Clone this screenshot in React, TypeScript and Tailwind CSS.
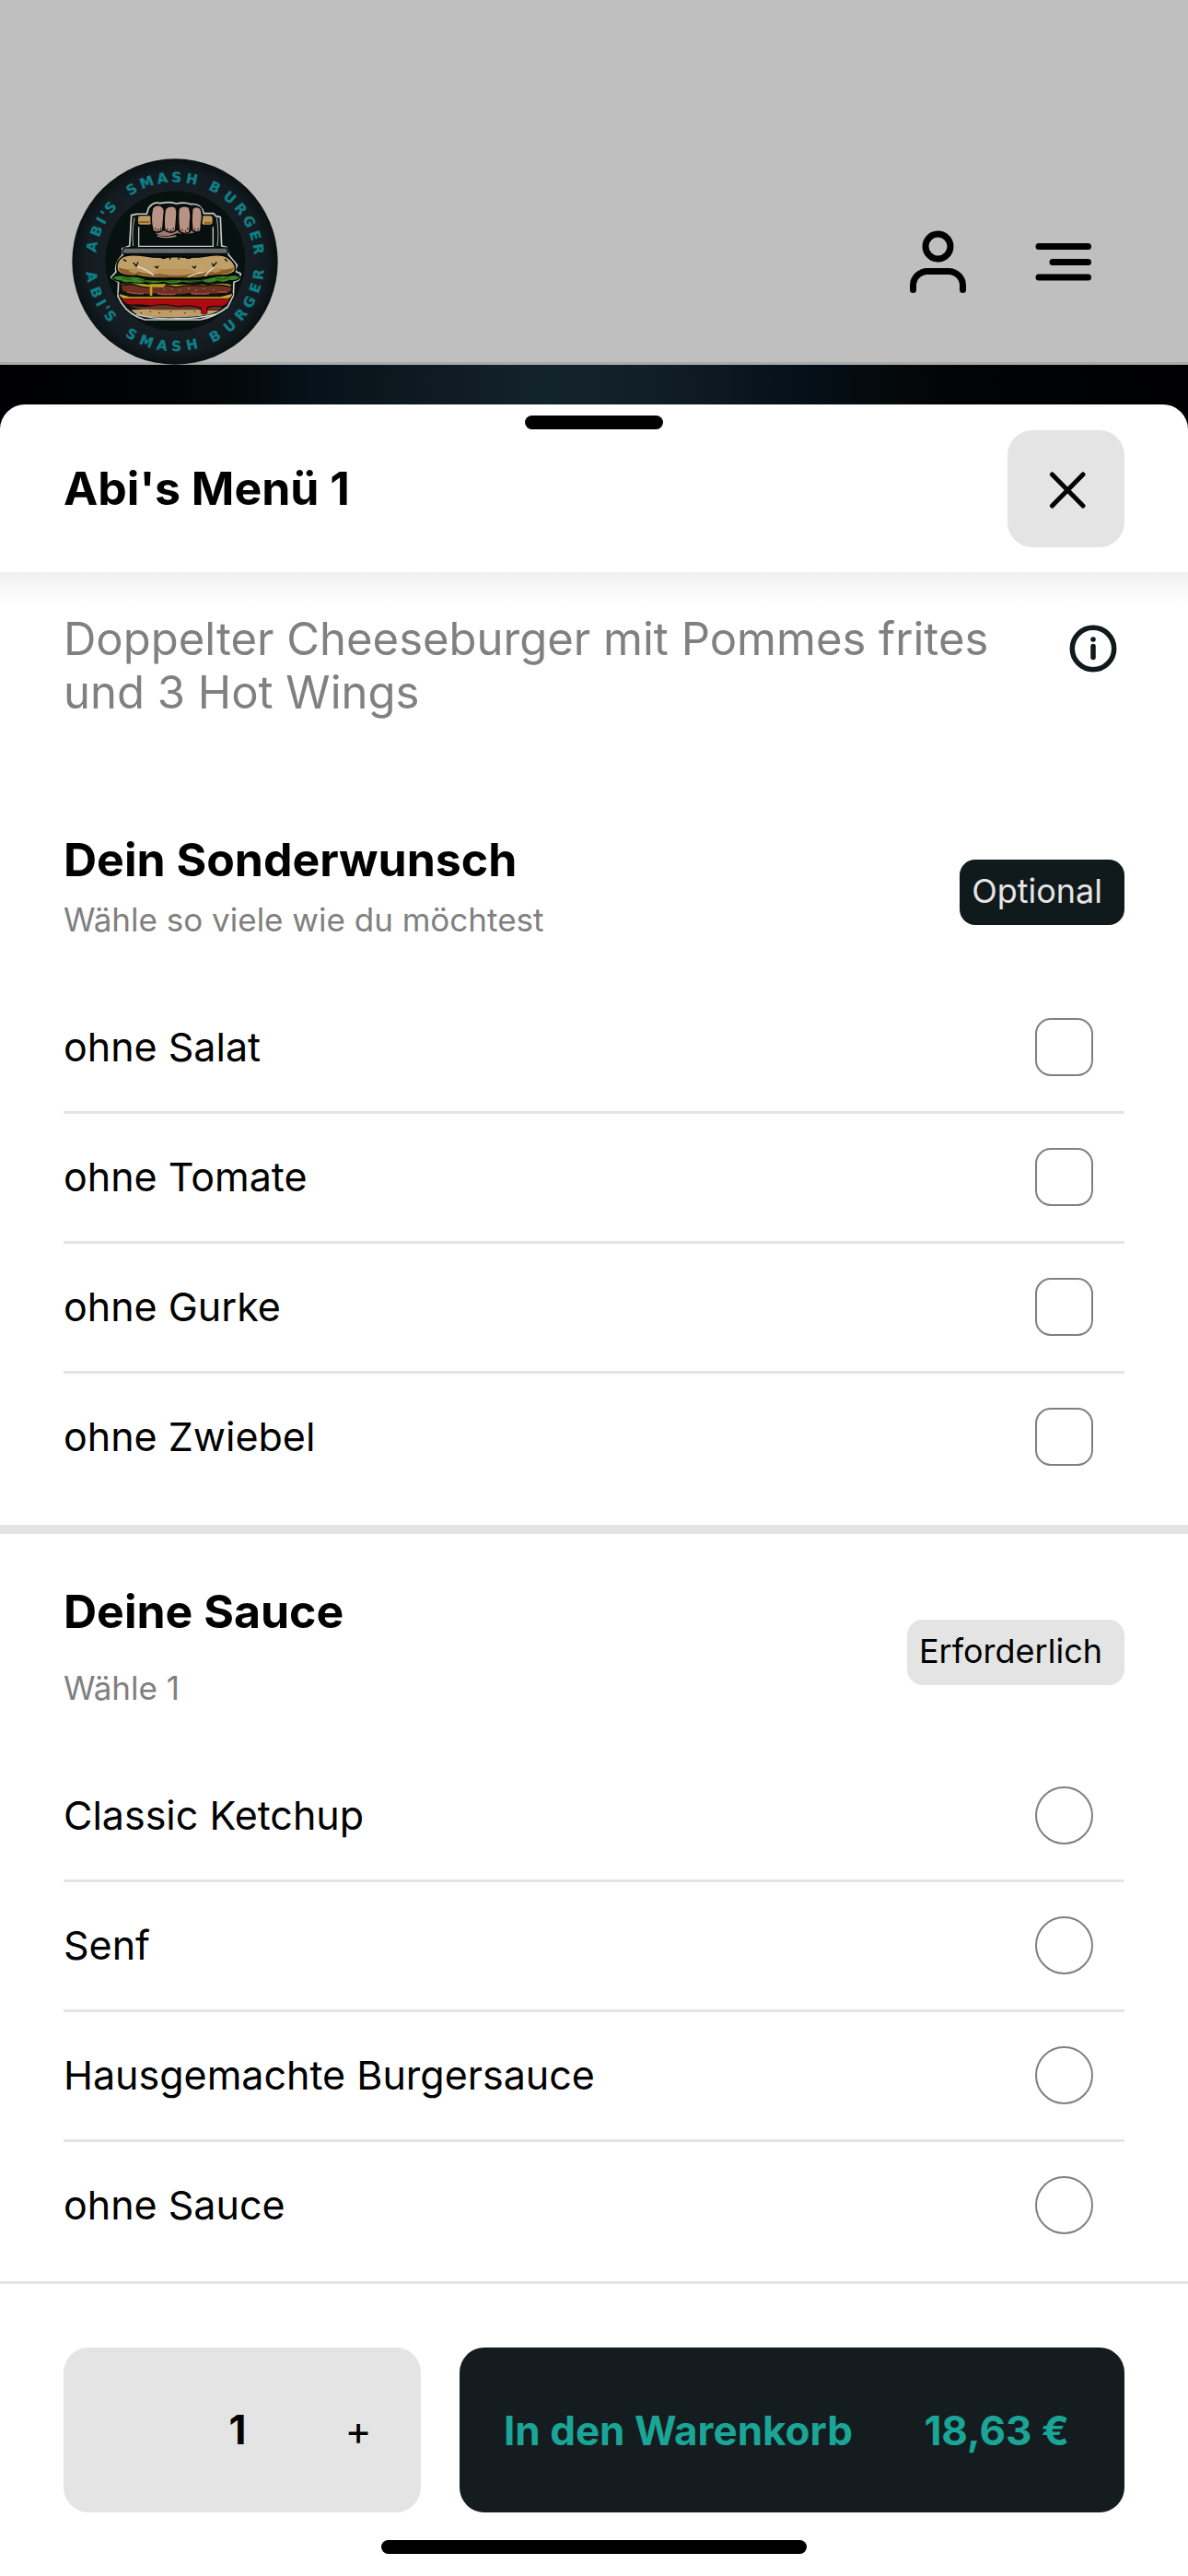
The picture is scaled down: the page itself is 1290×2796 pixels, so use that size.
import { useState } from "react";

const WISHES = ["ohne Salat", "ohne Tomate", "ohne Gurke", "ohne Zwiebel"];
const SAUCES = ["Classic Ketchup", "Senf", "Hausgemachte Burgersauce", "ohne Sauce"];

// Words of the badge ring; angles are degrees from the vertical axis.
const RING_WORDS = [
  { word: "ABI'S", angles: [-80, -69, -61, -56, -50] },
  { word: "SMASH", angles: [-31, -20, -9, 1, 11] },
  { word: "BURGER", angles: [28, 40, 51, 61, 72, 81] },
];
const HALF_WIDTH: Record<string, number> = { M: 21, I: 8, "'": 6 };

function ringGlyphs(word: string, angles: number[], top: boolean) {
  const cx = 388;
  const cy = 373;
  const xs: string[] = [];
  const ys: string[] = [];
  const rot: string[] = [];
  angles.forEach((deg, i) => {
    const a = (deg * Math.PI) / 180;
    const hw = HALF_WIDTH[word[i]] ?? 16;
    const r = top ? 259 : 291;
    const s = top ? 1 : -1;
    xs.push((cx + r * Math.sin(a) - hw * Math.cos(a)).toFixed(1));
    ys.push((cy - s * (r * Math.cos(a) + hw * Math.sin(a))).toFixed(1));
    rot.push(String(s * deg));
  });
  return { x: xs.join(" "), y: ys.join(" "), rotate: rot.join(" ") };
}

function Logo() {
  return (
    <svg viewBox="52 37 672 672" className="size-[224px]" role="img" aria-label="Abi's Smash Burger">
      <defs>
        <radialGradient id="disc">
          <stop offset="0.7" stopColor="#161e23" />
          <stop offset="0.88" stopColor="#141b20" />
          <stop offset="1" stopColor="#091113" />
        </radialGradient>
      </defs>
      <circle cx="388" cy="373" r="335" fill="url(#disc)" />
      <circle cx="389" cy="371" r="228" fill="#061110" />
      <g fill="#0f7f86" stroke="#0f7f86" strokeWidth="1" fontSize="45" fontWeight="700" fontFamily="DejaVu Sans, sans-serif">
        {RING_WORDS.map(({ word, angles }) => (
          <text key={word} {...ringGlyphs(word, angles, true)}>
            {word}
          </text>
        ))}
        {RING_WORDS.map(({ word, angles }) => (
          <text key={word + "-low"} {...ringGlyphs(word, angles, false)}>
            {word}
          </text>
        ))}
      </g>
      {/* press frame */}
      <path
        d="M246 222 L262 218 H296 L302 198 Q318 176 340 183 Q370 176 392 184 Q420 178 440 186 Q474 182 482 216 H514 L520 224 L536 228 L540 322 L556 326 L562 350 L590 384 L584 404 L602 412 L596 432 L580 440 L578 484 L560 520 Q520 552 470 562 H290 Q240 548 214 508 L202 486 L204 440 L180 424 L196 406 Q190 380 218 350 L216 330 L240 322 Z"
        fill="#0a1312"
        stroke="#c9cccb"
        strokeWidth="5"
        strokeLinejoin="round"
      />
      <path d="M270 260 V323 H512 V260" fill="#06110f" stroke="#c3c7c6" strokeWidth="4" />
      <path d="M256 230 Q246 280 252 322 M524 230 Q532 280 526 322" fill="none" stroke="#aeb3b2" strokeWidth="3" />
      <path d="M222 328 H556 Q562 340 558 347 H220 Q214 338 222 328 Z" fill="#656969" stroke="#050a0a" strokeWidth="4" />
      <rect x="266" y="222" width="48" height="32" rx="10" fill="#bd9b5b" stroke="#070b0a" strokeWidth="4" />
      <rect x="472" y="222" width="40" height="32" rx="10" fill="#bd9b5b" stroke="#070b0a" strokeWidth="4" />
      <path d="M270 244 H306 M484 246 H506" stroke="#8e6530" strokeWidth="6" />
      {/* hand */}
      <path d="M320 280 Q350 302 396 282 Q430 292 462 276 L440 270 H330 Z" fill="#9b7a70" stroke="#050908" strokeWidth="4" />
      <path d="M330 288 Q352 299 392 289" fill="none" stroke="#b99387" strokeWidth="4" />
      <g fill="#b99286" stroke="#050908" strokeWidth="5">
        <path d="M314 200 Q322 186 340 190 Q356 196 353 216 L348 270 Q334 284 316 272 Q306 236 314 200 Z" />
        <path d="M356 202 Q366 188 388 194 Q396 202 394 222 L390 272 Q374 284 354 270 Q350 234 356 202 Z" />
        <path d="M400 200 Q414 186 434 196 Q442 214 438 240 L436 276 Q418 288 402 274 Q396 234 400 200 Z" />
        <path d="M444 200 Q458 188 472 200 Q480 220 474 246 L472 272 Q458 284 444 270 Q440 234 444 200 Z" />
      </g>
      <path
        d="M322 262 l4 8 M332 266 l2 8 M342 262 l-2 8 M362 264 l3 8 M374 268 l1 8 M384 262 l-3 8 M410 266 l3 8 M422 270 l1 8 M430 262 l-2 8 M452 264 l2 8 M464 264 l-2 8"
        stroke="#2b1f1c"
        strokeWidth="3"
      />
      {/* bun */}
      <path
        d="M214 360 Q232 346 290 354 Q330 362 390 356 Q450 362 494 354 Q544 346 564 362 Q592 384 582 406 Q560 424 520 416 Q470 430 390 426 Q310 430 262 418 Q218 424 200 402 Q194 374 214 360 Z"
        fill="#c0a069"
        stroke="#050908"
        strokeWidth="5"
      />
      <path
        d="M204 392 Q226 402 252 398 Q300 420 340 412 Q400 424 452 410 Q510 412 532 398 Q560 402 580 392 Q576 412 548 414 Q500 416 470 422 Q390 428 310 422 Q270 410 230 416 Q206 410 204 392 Z"
        fill="#8d5e26"
      />
      <path d="M236 404 l20 -12 l16 12 l-16 8 Z M500 402 l22 -10 l18 10 l-20 8 Z M312 408 l30 -12 h90 l30 12 l-40 6 h-70 Z" fill="#b8925a" />
      <path d="M262 388 Q294 396 318 418 M480 408 Q448 412 430 424 M520 388 Q500 400 486 420" fill="none" stroke="#e2dccb" strokeWidth="4" />
      <path
        d="M252 376 l10 12 l6 -14 M322 388 l8 6 l4 -8 M444 388 l8 6 l4 -8 M508 378 l6 10 l10 -14 M344 362 h14 M372 358 v8 M400 358 v8 M424 362 h16 M220 366 l10 6 M550 364 l8 8"
        fill="none"
        stroke="#120d06"
        strokeWidth="4"
      />
      {/* salad */}
      <path
        d="M184 424 Q204 412 232 422 Q262 416 290 430 Q330 436 388 430 Q450 436 490 428 Q530 416 560 420 Q584 412 600 422 Q592 438 566 434 Q548 446 526 436 Q500 450 476 438 Q440 448 412 440 Q380 452 350 440 Q314 448 290 440 Q262 450 244 440 Q224 446 212 436 Q194 438 184 424 Z"
        fill="#3c8526"
        stroke="#050908"
        strokeWidth="4"
      />
      <path d="M216 426 q20 8 34 2 M270 432 q30 8 56 2 M356 436 h40 M430 436 q30 4 50 -2 M520 428 q20 6 44 -2" fill="none" stroke="#1c4a14" strokeWidth="3" />
      {/* patties, cheese and ketchup */}
      <path d="M210 446 Q240 438 300 446 H500 Q552 438 572 448 L570 464 H212 Z" fill="#b9a228" stroke="#050908" strokeWidth="3" />
      <path
        d="M210 452 Q236 442 262 450 Q290 460 314 456 Q352 444 390 456 Q440 446 480 452 Q530 444 572 456 Q578 470 560 474 Q500 484 440 476 Q390 486 330 478 Q260 484 216 470 Z"
        fill="#6b3223"
        stroke="#150b08"
        strokeWidth="4"
      />
      <path d="M306 446 H360 L350 456 H314 V484 Q309 490 306 482 Z" fill="#b9a228" />
      <path d="M232 472 q30 8 54 4 M330 476 q30 6 60 2 M440 476 q40 4 60 0 M530 472 h30" fill="none" stroke="#a5474a" strokeWidth="5" />
      <path d="M350 464 h4 M376 462 h5 M402 466 h4 M430 460 h5 M456 466 h4 M480 460 h5 M512 464 h4" stroke="#b07a5e" strokeWidth="4" />
      <path d="M204 476 L240 486 H536 L576 476 Q576 490 560 494 H220 Q206 490 204 476 Z" fill="#c3ab2b" stroke="#050908" strokeWidth="3" />
      <path
        d="M216 494 H566 Q560 512 540 518 Q512 514 492 520 V540 Q482 552 474 540 V522 Q430 512 400 518 Q350 508 320 516 Q270 508 240 514 Q222 508 216 494 Z"
        fill="#ad0a12"
      />
      <path
        d="M234 512 Q280 524 316 516 Q350 508 400 520 Q440 512 470 524 V532 H300 Q256 530 234 512 Z M494 522 Q520 514 544 520 L534 532 H494 Z"
        fill="#6b3223"
        stroke="#150b08"
        strokeWidth="3"
      />
      <path d="M246 530 Q300 526 330 530 H472 V540 Q484 552 494 540 V532 H532 Q500 550 440 552 Q340 558 280 550 Q256 544 246 530 Z" fill="#bd9e69" />
      <path d="M276 540 h4 M306 536 h4 M336 540 h4 M372 536 h4 M418 540 h4 M450 536 h4" stroke="#3a2c16" strokeWidth="4" />
      <path d="M262 546 Q330 562 390 558 Q460 560 520 544" fill="none" stroke="#d3d3cf" strokeWidth="4" />
    </svg>
  );
}

function SiteHeader() {
  return (
    <header className="flex items-center justify-between bg-[#bfbfbf] pt-[172px] pr-[100px] pl-[78px] shadow-[inset_0_-3px_0_#a9abab]">
      <a href="#start">
        <Logo />
      </a>
      <div className="flex gap-16">
        <button type="button" aria-label="Konto">
          <svg viewBox="0 0 72 72" className="size-[72px]" fill="none" stroke="#000" strokeWidth="7" strokeLinecap="round">
            <circle cx="36.500" cy="19.500" r="13.500" />
            <path d="M9.500 66.500 V62 A15.500 15.500 0 0 1 25 46.500 H48 A15.500 15.500 0 0 1 63.500 62 V66.500" />
          </svg>
        </button>
        <button type="button" aria-label="Menü">
          <svg viewBox="0 0 72 72" className="size-[72px]" fill="none" stroke="#000" strokeWidth="7" strokeLinecap="round">
            <path d="M10 19.500 H63.500 M25 36.500 H63.500 M10 53 H63.500" />
          </svg>
        </button>
      </div>
    </header>
  );
}

type Option = { type: "checkbox" | "radio"; name: string; label: string };

function OptionRow({ type, name, label }: Option) {
  return (
    <li className="border-b-3 border-[#e4e4e4] last:border-b-0">
      <label className="flex h-[138px] items-center justify-between pr-[34px] pb-0.5 text-[43px]">
        <span>{label}</span>
        <input
          type={type}
          name={name}
          className={
            type === "radio"
              ? "size-[63px] appearance-none rounded-full border-2 border-[#808080] checked:bg-[#10191b]"
              : "size-[63px] appearance-none rounded-[17px] border-2 border-[#808080] checked:bg-[#10191b]"
          }
        />
      </label>
    </li>
  );
}

export default function App() {
  const [count, setCount] = useState(1);

  return (
    <div className="flex min-h-screen flex-col bg-[linear-gradient(90deg,#000004_0%,#010304_12%,#04090b_20%,#05121a_26%,#0a181e_32%,#0f1c26_39%,#13232b_46%,#101e28_55%,#0b181f_61%,#05101a_67%,#04090b_75%,#010304_82%,#000003_100%)] font-['Inter',sans-serif] text-black">
      <SiteHeader />
      <main className="mt-[43px] flex flex-1 flex-col rounded-t-[27px] bg-white">
        <div className="relative flex h-[182px] items-center justify-between px-[69px]">
          <div className="absolute top-3 left-1/2 h-[15px] w-[150px] -translate-x-1/2 rounded-full bg-black" />
          <h1 className="text-[50px] font-bold">Abi's Menü 1</h1>
          <button type="button" aria-label="Schließen" className="flex size-[127px] items-center justify-center rounded-[27px] bg-[#e4e4e4]">
            <svg viewBox="0 0 44 44" className="size-11" fill="none" stroke="#000" strokeWidth="5" strokeLinecap="round">
              <path d="M6.500 7 L40 41 M40 7 L6.500 41" />
            </svg>
          </button>
        </div>

        <div className="flex items-start justify-between bg-[linear-gradient(180deg,#f0f0f0_0,#ffffff_36px)] px-[69px] pt-11">
          <p className="text-[49px] leading-[58px] text-[#808080]">Doppelter Cheeseburger mit Pommes frites und 3 Hot Wings</p>
          <button type="button" aria-label="Informationen" className="mt-[13px] mr-2 ml-10 shrink-0">
            <svg viewBox="0 0 52 52" className="size-[52px]" fill="none" stroke="#10191b" strokeWidth="5.500" strokeLinecap="round">
              <circle cx="26" cy="26" r="22.700" />
              <path d="M26 23.500 V35.500" />
              <circle cx="26" cy="16" r="2.800" fill="#10191b" stroke="none" />
            </svg>
          </button>
        </div>

        <section className="border-b-10 border-[#e4e4e4] px-[69px] pt-[122px] pb-[26px]">
          <div className="mb-[35px] flex items-center justify-between">
            <div className="pb-3">
              <h2 className="text-[50px] leading-[60px] font-bold">Dein Sonderwunsch</h2>
              <p className="mt-3 text-[35px] leading-[46px] text-[#808080]">Wähle so viele wie du möchtest</p>
            </div>
            <span className="flex h-[71px] items-center rounded-[17px] bg-[#10191b] pr-6 pb-0.5 pl-[13px] text-[36px] text-[#e5e5e5]">Optional</span>
          </div>
          <ul>
            {WISHES.map((label) => (
              <OptionRow key={label} type="checkbox" name="wunsch" label={label} />
            ))}
          </ul>
        </section>

        <section className="px-[69px] pt-[54px] pb-[13px]">
          <div className="mb-[35px] flex items-center justify-between">
            <div className="pb-3">
              <h2 className="text-[50px] leading-[60px] font-bold">Deine Sauce</h2>
              <p className="mt-[30px] text-[35px] leading-[46px] text-[#808080]">Wähle 1</p>
            </div>
            <span className="flex h-[71px] items-center rounded-[17px] bg-[#e4e4e4] pr-6 pb-0.5 pl-[13px] text-[36px]">Erforderlich</span>
          </div>
          <ul>
            {SAUCES.map((label) => (
              <OptionRow key={label} type="radio" name="sauce" label={label} />
            ))}
          </ul>
        </section>

        <footer className="mt-auto border-t-3 border-[#e4e4e4] px-[69px] pt-[69px] pb-6">
          <div className="flex gap-[42px]">
            <div className="grid h-[179px] w-[388px] grid-cols-[1fr_1fr_136px] items-center rounded-[27px] bg-[#e4e4e4] text-[44px]">
              <button type="button" aria-label="Weniger" className="h-full" onClick={() => setCount(Math.max(1, count - 1))} />
              <output className="pb-0.5 text-center font-bold">{count}</output>
              <button type="button" aria-label="Mehr" className="h-full" onClick={() => setCount(count + 1)}>
                +
              </button>
            </div>
            <button type="button" className="flex h-[179px] flex-1 items-center justify-between rounded-[27px] bg-[#141c1f] pr-[60px] pl-12 text-[44px] font-bold text-[#1aa596]">
              <span>In den Warenkorb</span>
              <span>18,63 €</span>
            </button>
          </div>
          <div className="mx-auto mt-[30px] h-[15px] w-[462px] rounded-full bg-black" />
        </footer>
      </main>
    </div>
  );
}
